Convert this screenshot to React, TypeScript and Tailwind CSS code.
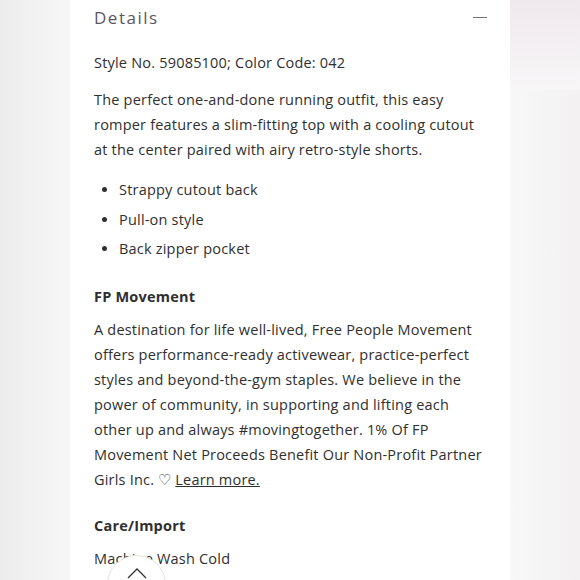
const bullets = ["Strappy cutout back", "Pull-on style", "Back zipper pocket"];

export default function App() {
  return (
    <main className="relative w-[580px] h-[580px] overflow-hidden flex justify-center bg-[linear-gradient(90deg,#ececec_0%,#f7f7f7_12%,#f8f8f8_88%,#f3f1f2_100%)] font-['Open_Sans',sans-serif] text-[#2f2f2f]">
      <div className="absolute right-0 top-0 w-[70px] h-[90px] bg-[linear-gradient(180deg,#efe8ec,#f8f7f8)]" />
      <section className="relative w-[440px] h-full bg-white px-6 flex flex-col">
        <div className="h-[35px] flex items-center justify-between">
          <h2 className="text-[17px] tracking-[1.5px] text-[#5d5463]">Details</h2>
          <span className="w-[14px] h-px bg-[#77727a] mr-[-1px]" />
        </div>

        <p className="mt-[15px] text-[14.5px] leading-[25px] tracking-[0.2px]">Style No. 59085100; Color Code: 042</p>

        <p className="mt-[12px] text-[14.5px] leading-[25px] tracking-[0.2px]">
          The perfect one-and-done running outfit, this easy romper features a slim-fitting top with a cooling cutout at the center paired with airy retro-style shorts.
        </p>

        <ul className="mt-[15px] pl-[25px] list-disc text-[14.5px] leading-[25px] tracking-[0.2px] flex flex-col gap-[4.5px]">
          {bullets.map((b) => (
            <li key={b}>{b}</li>
          ))}
        </ul>

        <h3 className="mt-[23px] text-[14.5px] leading-[25px] font-bold tracking-[0.2px]">FP Movement</h3>

        <p className="mt-[8px] text-[14.5px] leading-[25px] tracking-[0.2px]">
          A destination for life well-lived, Free People Movement offers performance-ready activewear, practice-perfect styles and beyond-the-gym staples. We believe in the power of community, in supporting and lifting each other up and always #movingtogether. 1% Of FP Movement Net Proceeds Benefit Our Non-Profit Partner Girls Inc. ♡ <a className="underline">Learn more.</a>
        </p>

        <h3 className="mt-[21px] text-[14.5px] leading-[25px] font-bold tracking-[0.2px]">Care/Import</h3>

        <p className="mt-[8px] text-[14.5px] leading-[25px] tracking-[0.2px]">Machine Wash Cold</p>

        <button className="absolute left-[37px] top-[555px] w-[59px] h-[59px] rounded-full bg-white border border-[#e6e2dc] flex justify-center pt-[12px]">
          <svg width="20" height="11" viewBox="0 0 20 11" fill="none" stroke="#333" strokeWidth="1.3">
            <polyline points="1,10 10,1 19,10" />
          </svg>
        </button>
      </section>
    </main>
  );
}
